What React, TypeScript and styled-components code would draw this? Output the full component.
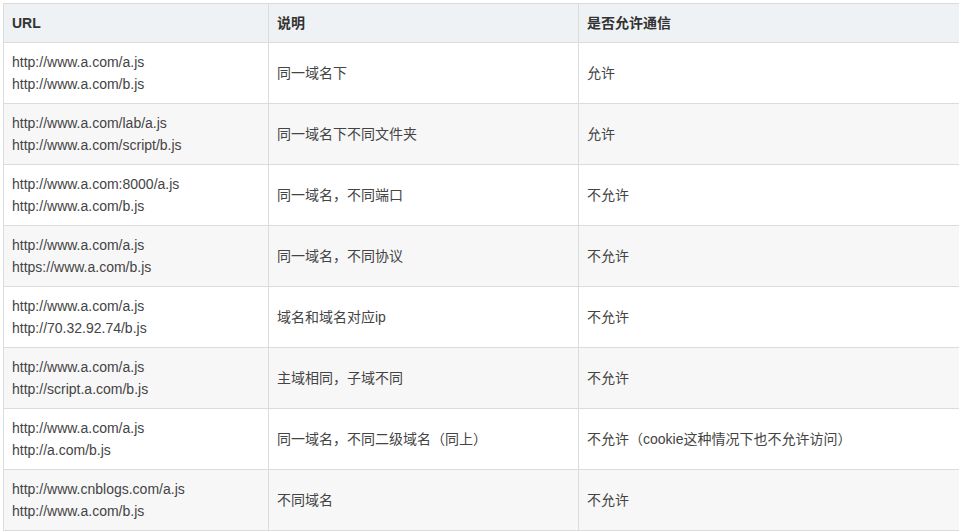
import React from 'react';
import styled, { createGlobalStyle } from 'styled-components';

const GlobalStyle = createGlobalStyle`
  html, body {
    margin: 0;
    padding: 0;
    background: #fff;
    overflow: hidden;
  }
  body {
    padding: 3px 0 0 3px;
    font-family: 'Liberation Sans', Arial, 'Noto Sans CJK SC', sans-serif;
  }
`;

const Table = styled.table`
  width: 962px;
  table-layout: fixed;
  border-collapse: collapse;
  font-size: 14px;
  line-height: 22px;
  color: #444;
`;

const HeadCell = styled.th<{ $w?: number }>`
  width: ${p => (p.$w ? `${p.$w}px` : 'auto')};
  background: #eff2f5;
  border: 1px solid #dcdcdc;
  padding: 8px;
  text-align: left;
  font-weight: bold;
  color: #333;
`;

const Row = styled.tr<{ $alt: boolean }>`
  background: ${p => (p.$alt ? '#f7f7f7' : '#fff')};
`;

const Cell = styled.td`
  border: 1px solid #dcdcdc;
  padding: 8px;
  vertical-align: middle;
  white-space: nowrap;
`;

const rows = [
  { urls: ['http://www.a.com/a.js', 'http://www.a.com/b.js'], desc: '同一域名下', ok: '允许' },
  { urls: ['http://www.a.com/lab/a.js', 'http://www.a.com/script/b.js'], desc: '同一域名下不同文件夹', ok: '允许' },
  { urls: ['http://www.a.com:8000/a.js', 'http://www.a.com/b.js'], desc: '同一域名，不同端口', ok: '不允许' },
  { urls: ['http://www.a.com/a.js', 'https://www.a.com/b.js'], desc: '同一域名，不同协议', ok: '不允许' },
  { urls: ['http://www.a.com/a.js', 'http://70.32.92.74/b.js'], desc: '域名和域名对应ip', ok: '不允许' },
  { urls: ['http://www.a.com/a.js', 'http://script.a.com/b.js'], desc: '主域相同，子域不同', ok: '不允许' },
  { urls: ['http://www.a.com/a.js', 'http://a.com/b.js'], desc: '同一域名，不同二级域名（同上）', ok: '不允许（cookie这种情况下也不允许访问）' },
  { urls: ['http://www.cnblogs.com/a.js', 'http://www.a.com/b.js'], desc: '不同域名', ok: '不允许' },
];

export default function App() {
  return (
    <>
      <GlobalStyle />
      <Table>
        <thead>
          <tr>
            <HeadCell $w={248}>URL</HeadCell>
            <HeadCell $w={293}>说明</HeadCell>
            <HeadCell>是否允许通信</HeadCell>
          </tr>
        </thead>
        <tbody>
          {rows.map((r, i) => (
            <Row key={i} $alt={i % 2 === 1}>
              <Cell>
                {r.urls[0]}
                <br />
                {r.urls[1]}
              </Cell>
              <Cell>{r.desc}</Cell>
              <Cell>{r.ok}</Cell>
            </Row>
          ))}
        </tbody>
      </Table>
    </>
  );
}
